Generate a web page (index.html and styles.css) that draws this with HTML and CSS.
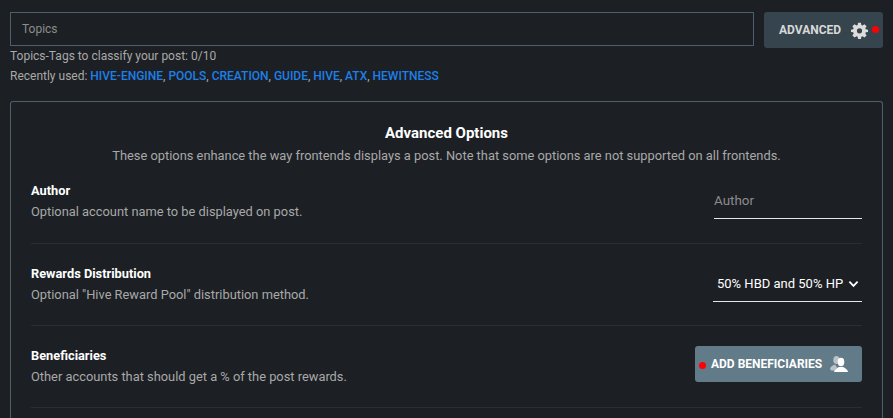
FILE: index.html
```
<!DOCTYPE html>
<html lang="en">
<head>
<meta charset="utf-8">
<title>Advanced Options</title>
<link rel="stylesheet" href="styles.css">
</head>
<body>
<div class="top-row">
  <div class="topics-input">Topics</div>
  <button class="advanced-btn">
    <span>ADVANCED</span>
    <svg class="gear" viewBox="0 0 24 24" width="17" height="17"><path fill="#dcdcdc" fill-rule="evenodd" d="M10 1h4l.6 3.100 1.700.7L19 3l3 3-1.800 2.700.7 1.700L24 11v3l-3.100.6-.7 1.700L22 19l-3 3-2.700-1.800-1.700.7L14 24h-4l-.6-3.100-1.700-.7L5 22l-3-3 1.800-2.700-.7-1.700L0 14v-3l3.100-.6.7-1.700L2 6l3-3 2.700 1.800 1.700-.7zM12 8.800a3.700 3.700 0 1 0 0 7.400 3.700 3.700 0 0 0 0-7.400z"/></svg>
    <i class="dot dot-adv"></i>
  </button>
</div>
<div class="hint">Topics-Tags to classify your post: 0/10</div>
<div class="hint recent">Recently used: <a>HIVE-ENGINE</a>, <a>POOLS</a>, <a>CREATION</a>, <a>GUIDE</a>, <a>HIVE</a>, <a>ATX</a>, <a>HEWITNESS</a></div>
<section class="panel">
  <h2>Advanced Options</h2>
  <p class="sub">These options enhance the way frontends displays a post. Note that some options are not supported on all frontends.</p>
  <div class="opt opt-author">
    <div><h3>Author</h3><p>Optional account name to be displayed on post.</p></div>
    <div class="field author">Author</div>
  </div>
  <div class="opt opt-rewards">
    <div><h3>Rewards Distribution</h3><p>Optional "Hive Reward Pool" distribution method.</p></div>
    <div class="field select"><span>50% HBD and 50% HP</span>
      <svg viewBox="0 0 12 8" width="11" height="8"><path d="M1.500 1.500 6 6l4.500-4.500" fill="none" stroke="#fff" stroke-width="2"/></svg>
    </div>
  </div>
  <div class="opt opt-benef">
    <div><h3>Beneficiaries</h3><p>Other accounts that should get a % of the post rewards.</p></div>
    <button class="benef-btn">
      <i class="dot dot-benef"></i>
      <span>ADD BENEFICIARIES</span>
      <svg viewBox="0 0 18 16" width="18" height="16"><g fill="#b9c3c9"><ellipse cx="6.500" cy="4" rx="3.200" ry="4"/><path d="M0 12.500c.5-2 3-3.200 5-4l2 3-2.500 3H1z"/></g><g fill="#fff"><ellipse cx="11" cy="6" rx="3.300" ry="4.200"/><path d="M4 16c.3-2.500 3-4 5-5h4c2 1 4.700 2.500 5 5z"/></g></svg>
    </button>
  </div>
</section>
</body>
</html>
```

FILE: styles.css
```
* { box-sizing: border-box; }
html, body { margin: 0; height: 100%; overflow: hidden; }
body {
  background: #1c2024;
  color: #a9a9a9;
  font-family: Roboto, sans-serif;
  font-size: 12px;
  padding: 12px 10px 0;
}
.top-row { display: flex; justify-content: space-between; align-items: flex-start; }
.topics-input {
  width: 744px;
  height: 34px;
  border: 1px solid #4c5f6b;
  padding: 0 11px;
  line-height: 32px;
  font-size: 12px;
  color: #8c8c8c;
}
.advanced-btn {
  width: 119px;
  height: 36px;
  border: 0;
  border-radius: 3px;
  background: #36444d;
  color: #d8d8d8;
  font: 700 12px Roboto, sans-serif;
  display: flex;
  align-items: center;
  padding: 0 0 0 15px;
  position: relative;
}
.gear { margin-left: 10px; }
.dot { position: absolute; width: 7px; height: 7px; border-radius: 50%; background: #f00; }
.dot-adv { left: 108px; top: 14px; }
.hint { line-height: 20px; }
.top-row + .hint { margin-top: -2px; }
.recent a { color: #1e7fe8; font-weight: 500; }
.panel {
  margin-top: 15px;
  height: 317px;
  border: 1px solid #4c5f6b;
  border-bottom: 0;
  border-radius: 3px 3px 0 0;
  padding: 21px 20px 0;
}
.panel h2 { margin: 0; text-align: center; color: #fff; font-size: 15px; font-weight: 700; line-height: 20px; }
.sub { margin: 5px 0 0; text-align: center; font-size: 12.85px; line-height: 16px; }
.opt {
  display: flex;
  justify-content: space-between;
  align-items: center;
  border-bottom: 1px solid #2a2e32;
}
.opt h3 { margin: 0 0 6px; color: #fff; font-size: 12.8px; font-weight: 700; line-height: 14px; }
.opt p { margin: 0; font-size: 12.85px; line-height: 16px; }
.opt-author { height: 72px; padding-bottom: 12px; margin-top: 8px; }
.opt-rewards { height: 82px; }
.opt-benef { height: 82px; }
.field { border-bottom: 1px solid #e6e6e6; color: #fff; font-size: 13px; }
.author { width: 148px; height: 35px; margin-bottom: 1px; color: #8c8c8c; line-height: 33px; font-size: 13.4px; }
.select {
  width: 149px;
  height: 35px;
  margin-bottom: 1px;
  padding: 0 3px 0 4px;
  display: flex;
  align-items: center;
  justify-content: space-between;
}
.benef-btn {
  width: 167px;
  height: 36px;
  margin-bottom: 6px;
  border: 0;
  border-radius: 3px;
  background: #627b88;
  color: #fff;
  font: 700 12px Roboto, sans-serif;
  display: flex;
  align-items: center;
  padding: 0 0 0 16px;
  position: relative;
}
.benef-btn svg { margin-left: 8px; }
.dot-benef { left: 4px; top: 16px; }
```
